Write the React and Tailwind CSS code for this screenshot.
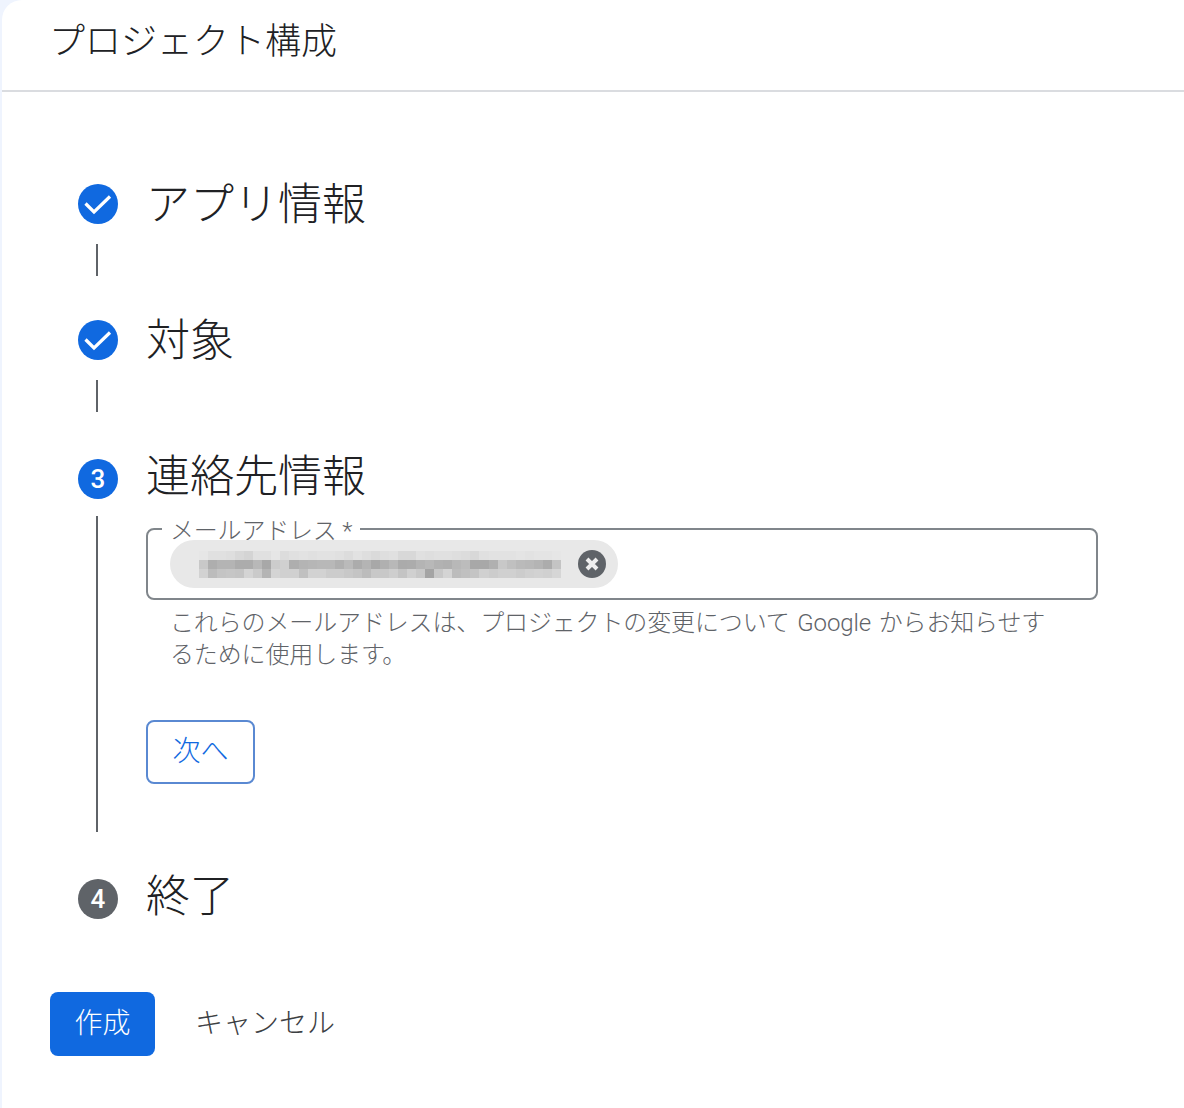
import React from "react";

const shades = [
  "e6e6e6,e0e0e0,e0e0e0,dedede,d8d8d8,d4d4d4,e0e0e0,e0e0e0,e6e6e6,dcdcdc,e0e0e0,e2e2e2,e0e0e0,e2e2e2,e2e2e2,e0e0e0,dcdcdc,e2e2e2,dedede,dadada,dedede,e0e0e0,d8d8d8,d8d8d8,e0e0e0,dedede,e0e0e0,e0e0e0,dedede,dcdcdc,d8d8d8,e0e0e0,e2e2e2,e2e2e2,e2e2e2,e4e4e4,e2e2e2,e4e4e4,e4e4e4,e6e6e6",
  "c8c8c8,aeaeae,b4b4b4,b4b4b4,acacac,acacac,b8b8b8,a8a8a8,cccccc,d0d0d0,aeaeae,b4b4b4,b6b6b6,b8b8b8,b8b8b8,b0b0b0,bababa,acacac,b4b4b4,a8a8a8,b0b0b0,b8b8b8,ababab,acacac,b4b4b4,b8b8b8,b2b2b2,b0b0b0,b8b8b8,bcbcbc,a8a8a8,a8a8a8,b0b0b0,c8c8c8,c0c0c0,bababa,b8b8b8,b4b4b4,acacac,c4c4c4",
  "d2d2d2,bcbcbc,c4c4c4,c6c6c6,c4c4c4,d4d4d4,cacaca,b4b4b4,d4d4d4,d0d0d0,d0d0d0,c0c0c0,d2d2d2,d2d2d2,cccccc,cccccc,c8c8c8,c4c4c4,bcbcbc,c8c8c8,c8c8c8,cecece,c4c4c4,d0d0d0,c8c8c8,a4a4a4,c8c8c8,d4d4d4,bcbcbc,c0c0c0,c4c4c4,d0d0d0,cccccc,d0d0d0,d0d0d0,cccccc,d0d0d0,d2d2d2,d0d0d0,d6d6d6",
];

const Mosaic = () => (
  <div className="flex flex-col">
    {shades.map((row, i) => (
      <div key={i} className="flex h-[9px]">
        {row.split(",").map((c, j) => (
          <div key={j} className="w-[9.05px]" style={{ backgroundColor: `#${c}` }} />
        ))}
      </div>
    ))}
  </div>
);

const CheckBadge = () => (
  <svg className="shrink-0" width="40" height="40" viewBox="0 0 40 40" fill="none">
    <circle cx="20" cy="20" r="20" fill="#1069e0" />
    <path d="M7.5 19.5 L16 28 L32 12.5" stroke="white" strokeWidth="3.2" />
  </svg>
);

const NumberBadge = ({ n, color }) => (
  <div
    className={`w-10 h-10 rounded-full flex items-center justify-center shrink-0 text-white text-[26px] font-medium ${color}`}
  >
    {n}
  </div>
);

const StepTitle = ({ children }) => (
  <h2 className="text-[44px] leading-[56px] font-light text-[#202124] ml-[28px]">{children}</h2>
);

const App = () => {
  return (
    <div
      className="w-[1184px] h-[1108px] overflow-hidden bg-[#eff4fe]"
      style={{ fontFamily: 'Roboto, "Noto Sans CJK JP", sans-serif' }}
    >
      <div className="ml-[2px] h-full bg-white rounded-tl-[20px]">
        <div className="h-[92px] border-b-2 border-[#dadce0] pl-[47px] pt-[14px]">
          <h1 className="text-[36px] leading-[56px] font-light text-[#202124]">プロジェクト構成</h1>
        </div>

        <div className="pl-[76px] pt-[92px]">
          <div className="flex items-center h-[56px] -mt-[8px]">
            <CheckBadge />
            <div className="pt-[2px]">
              <StepTitle>アプリ情報</StepTitle>
            </div>
          </div>
          <div className="w-[2px] h-8 bg-[#5f6368] ml-[18px] mt-[12px] mb-[36px]" />

          <div className="flex items-center h-[56px]">
            <CheckBadge />
            <div className="pt-[2px]">
              <StepTitle>対象</StepTitle>
            </div>
          </div>
          <div className="w-[2px] h-8 bg-[#5f6368] ml-[18px] mt-[12px] mb-[39px]" />

          <div className="flex items-center h-[56px]">
            <NumberBadge n="3" color="bg-[#1069e0]" />
            <div className="-mt-[4px]">
              <StepTitle>連絡先情報</StepTitle>
            </div>
          </div>

          <div className="flex mt-[9px]">
            <div className="w-[2px] h-[316px] bg-[#5f6368] ml-[18px] shrink-0" />
            <div className="ml-[48px] w-[952px] pt-[12px]">
              <div className="relative h-[72px] w-[952px] rounded-lg border-2 border-[#80868b]">
                <span className="absolute left-[14px] -top-[13px] h-[24px] bg-white pl-[8px] pr-[8px] text-[24px] leading-[28px] font-light tracking-[-0.2px] text-[#5f6368]">
                  メールアドレス *
                </span>
                <div className="relative ml-[22px] mt-[10px] w-[448px] h-12 rounded-full bg-[#e8e8e8] flex items-center pl-[29px]">
                  <Mosaic />
                  <svg className="absolute right-[12px] top-[10px]" width="28" height="28" viewBox="0 0 28 28">
                    <circle cx="14" cy="14" r="14" fill="#5f6368" />
                    <path d="M9 9 L19 19 M19 9 L9 19" stroke="#eeeeee" strokeWidth="4" />
                  </svg>
                </div>
              </div>
              <p className="mt-[7px] ml-[24px] w-[880px] text-[24px] leading-[32px] font-light tracking-[-0.14px] [word-spacing:2px] text-[#5f6368]">
                これらのメールアドレスは、プロジェクトの変更について Google からお知らせするために使用します。
              </p>
              <button className="mt-[49px] w-[109px] h-16 rounded-lg border-2 border-[#5a89d2] text-[#1069e0] text-[28px] font-light bg-white">
                次へ
              </button>
            </div>
          </div>

          <div className="flex items-center h-[56px] mt-[39px]">
            <NumberBadge n="4" color="bg-[#5f6368]" />
            <div className="-mt-[5px]">
              <StepTitle>終了</StepTitle>
            </div>
          </div>
        </div>

        <div className="flex items-center ml-[48px] mt-[65px]">
          <button className="w-[105px] h-16 rounded-lg bg-[#1069e0] text-white text-[28px] font-light">作成</button>
          <button className="ml-[40px] text-[#3c4043] text-[28px] font-light">キャンセル</button>
        </div>
      </div>
    </div>
  );
};

export default App;
